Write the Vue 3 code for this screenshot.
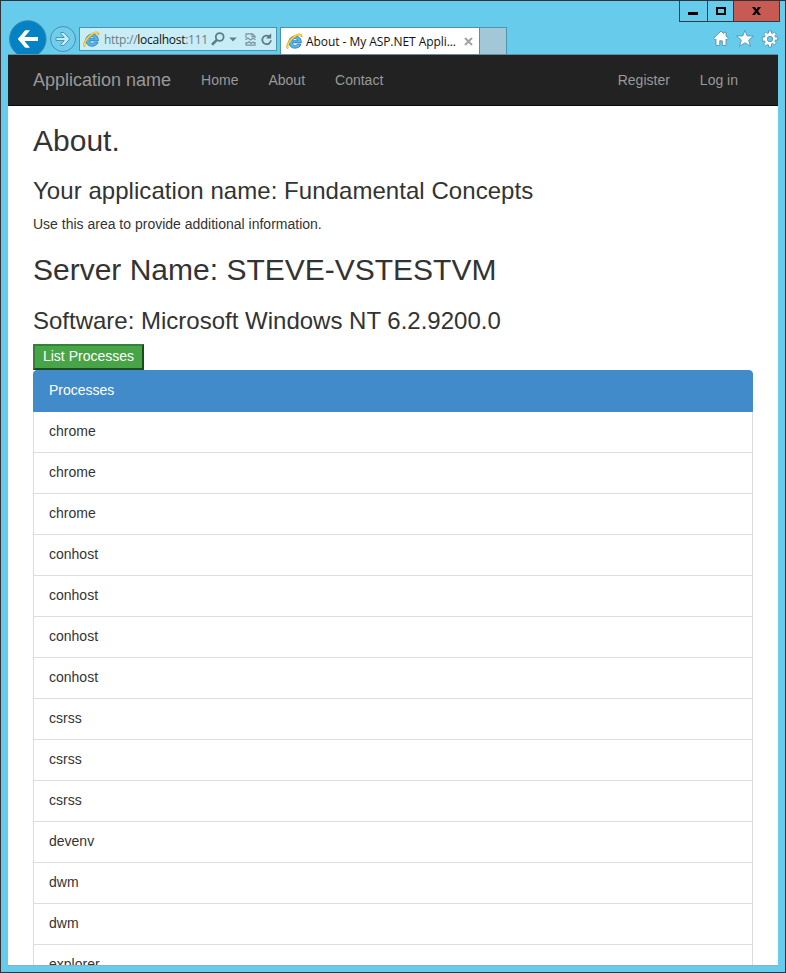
<script setup>
const processes = [
  'chrome', 'chrome', 'chrome', 'conhost', 'conhost', 'conhost', 'conhost',
  'csrss', 'csrss', 'csrss', 'devenv', 'dwm', 'dwm', 'explorer',
]
</script>

<template>
  <div class="window">
    <div class="caption">
      <button class="cap min" aria-label="Minimize">
        <svg width="27" height="20"><rect x="8" y="11" width="10" height="3" fill="#000" /></svg>
      </button>
      <button class="cap max" aria-label="Maximize">
        <svg width="25" height="20"><rect x="9" y="7" width="8" height="6" fill="none" stroke="#000" stroke-width="2" /></svg>
      </button>
      <button class="cap close" aria-label="Close">
        <svg width="45" height="20"><path d="M18 6h3l1.500 2.300L24 6h3l-3 4 3 4h-3l-1.500-2.300L21 14h-3l3-4z" fill="#000" /></svg>
      </button>
    </div>

    <div class="toolbar">
      <svg class="back" width="38" height="34" viewBox="0 0 38 34">
        <circle cx="18.800" cy="19" r="18.300" fill="#0482c4" stroke="#3a8ca9" stroke-width="1" />
        <path d="M29 17H15.500l5.500-6.800h-4.800L8.800 19l7.400 8.800H21L15.500 21H29z" fill="#fff" />
      </svg>
      <svg class="forward" width="28" height="28" viewBox="0 0 28 28">
        <circle cx="14" cy="14" r="12.500" fill="#70cdeb" stroke="#4592ae" stroke-width="1" />
        <path d="M7 12.500h8.200l-3.300-3.800V7.500h3l5.800 6.500-5.800 6.500h-3v-1.200l3.300-3.800H7z" fill="#c4edf9" stroke="#4895b0" stroke-width="1" />
      </svg>

      <div class="address">
        <svg class="ie" width="17" height="17" viewBox="0 0 17 17">
          <path d="M15.300 9.900H6.400c.3 2.800 4 3.300 5 1.300h3.600c-1.500 5.400-11.700 5.800-12.200-1.700C2.600 1.300 15.900.4 15.300 9.900zM6.500 7.700h5.100c-.4-2.800-4.600-2.800-5.100 0z" fill="#58b5e8" stroke="#2479b5" stroke-width=".8" />
          <path d="M2.200 15.600C-.3 13.500 2.600 8.300 7 4.600S15.800.1 15.400 4" fill="none" stroke="#e5a714" stroke-width="1.900" />
          <path d="M2 15C.5 13 3 8.300 7.200 4.500S15 .4 15.200 3" fill="none" stroke="#ffd640" stroke-width="1.100" />
        </svg>
        <span class="url">http://<b>localhost</b>:111</span>
        <svg class="search" width="14" height="14" viewBox="0 0 14 14">
          <circle cx="8.700" cy="5" r="3.900" fill="none" stroke="#5a7f8c" stroke-width="1.800" />
          <path d="M5.900 7.900L1 12.700" stroke="#5a7f8c" stroke-width="2.600" />
        </svg>
        <svg class="drop" width="8" height="5"><path d="M.3.500h7.400L4 4.500z" fill="#5a7f8c" /></svg>
        <svg class="compat" width="11" height="13" viewBox="0 0 11 13">
          <path d="M1 5V.8h6.500L10 3.200V5M1 9v3.200h9V9M7 1v2.700h3" fill="none" stroke="#78949e" stroke-width="1.200" />
          <path d="M.5 6.800L3 5l2.500 2L8 5.200l2.500 1.600M1.500 10.500L4 8.800l2 1.700L8 9l2 1.500" fill="none" stroke="#78949e" stroke-width="1.300" />
        </svg>
        <svg class="refresh" width="12" height="13" viewBox="0 0 12 13">
          <path d="M9.900 7.200A4.300 4.300 0 1 1 8.400 3.600" fill="none" stroke="#5c7984" stroke-width="1.800" />
          <path d="M10.200.3v5.200H5z" fill="#5c7984" />
        </svg>
      </div>

      <div class="tab">
        <svg class="ie" width="17" height="17" viewBox="0 0 17 17">
          <path d="M15.300 9.900H6.400c.3 2.800 4 3.300 5 1.300h3.600c-1.500 5.400-11.700 5.800-12.200-1.700C2.600 1.300 15.900.4 15.300 9.900zM6.500 7.700h5.100c-.4-2.800-4.600-2.800-5.100 0z" fill="#58b5e8" stroke="#2479b5" stroke-width=".8" />
          <path d="M2.200 15.600C-.3 13.500 2.600 8.300 7 4.600S15.800.1 15.400 4" fill="none" stroke="#e5a714" stroke-width="1.900" />
          <path d="M2 15C.5 13 3 8.300 7.200 4.500S15 .4 15.200 3" fill="none" stroke="#ffd640" stroke-width="1.100" />
        </svg>
        <span class="tab-title">About - My ASP.NET Appli...</span>
        <svg class="tab-close" width="9" height="9"><path d="M1 1l7 7M8 1L1 8" stroke="#a2a2a2" stroke-width="2" /></svg>
      </div>
      <div class="new-tab"></div>

      <div class="tools">
        <svg width="16" height="17" viewBox="0 0 16 17">
          <path d="M8 1L.6 8.300l1.500 1.400.9-.7v6.500h3.700v-4.700h2.600v4.700H13V9l.9.700 1.500-1.400-2.400-2.300V2.300h-2.200v1.500z" fill="#fff" stroke="#4b8ca5" stroke-width=".8" />
        </svg>
        <svg width="18" height="17" viewBox="0 0 18 17">
          <path d="M9 .5l2.200 5.400 6.300.2-4.800 3.900 1.700 6.200L9 12.800l-5.400 3.400L5.300 10 .5 6.100l6.300-.2z" fill="#fff" stroke="#4b8ca5" stroke-width=".8" />
        </svg>
        <svg width="18" height="18" viewBox="0 0 18 18">
          <path d="M7.500 1h3v2.100l1.100.5 1.700-1.500 2 2-1.400 1.700.5 1.200h2.300v3h-2.300l-.5 1.200 1.400 1.700-2 2-1.700-1.400-1.100.4V17h-3v-2.100l-1.100-.4-1.700 1.400-2-2 1.400-1.700-.5-1.200H1.300V7h2.300l.5-1.200-1.400-1.700 2-2 1.700 1.500 1.100-.5z" fill="#fff" stroke="#4b8ca5" stroke-width=".8" />
          <circle cx="9" cy="9" r="2.700" fill="#67cbeb" stroke="#4b8ca5" stroke-width=".8" />
        </svg>
      </div>
    </div>

    <div class="viewport">
      <nav class="navbar">
        <a class="brand">Application name</a>
        <a>Home</a>
        <a>About</a>
        <a>Contact</a>
        <a class="register">Register</a>
        <a>Log in</a>
      </nav>
      <main class="content">
        <h2>About.</h2>
        <h3 class="app-name">Your application name: Fundamental Concepts</h3>
        <p>Use this area to provide additional information.</p>
        <h2>Server Name: STEVE-VSTESTVM</h2>
        <h3 class="software">Software: Microsoft Windows NT 6.2.9200.0</h3>
        <button class="list-button">List Processes</button>
        <ul class="list">
          <li class="active">Processes</li>
          <li v-for="(name, i) in processes" :key="i">{{ name }}</li>
        </ul>
      </main>
    </div>
  </div>
</template>

<style>
body { margin: 0; overflow: hidden; }
</style>

<style scoped>
* { box-sizing: border-box; }
svg { display: block; flex: none; }
.window {
  width: 786px;
  height: 973px;
  display: flex;
  flex-direction: column;
  padding: 0 7px 6px;
  border: 1px solid #333236;
  background: #67cbeb;
  overflow: hidden;
  font-family: "Liberation Sans", Arial, sans-serif;
}
.caption {
  flex: none;
  display: flex;
  justify-content: flex-end;
  height: 21px;
  margin-right: -2px;
}
.cap {
  height: 21px;
  padding: 0;
  border: solid #343b40;
  border-width: 0 0 1px 1px;
  background: transparent;
}
.min { width: 28px; }
.max { width: 26px; }
.close { width: 47px; border-right-width: 1px; background: #c75b53; }
.toolbar {
  flex: none;
  display: flex;
  align-items: flex-start;
  height: 32px;
}
.back { margin: -2px 0 0 1px; }
.forward { margin: 3px 0 0 2px; }
.address {
  display: flex;
  align-items: center;
  width: 198px;
  height: 24px;
  margin: 5px 0 0 2px;
  padding-left: 3px;
  border: 1px solid #4a94ad;
  background: #c9edf7;
}
.url {
  width: 104px;
  margin-left: 4px;
  padding-top: 2px;
  white-space: nowrap;
  font: 12px/20px "Open Sans", "Noto Sans", sans-serif;
  letter-spacing: -0.27px;
  color: #697d85;
}
.url b { font-weight: 400; color: #111; }
.search { margin-left: 3px; }
.drop { margin-left: 4px; }
.compat { margin-left: 8px; }
.refresh { margin-left: 5px; }
.tab {
  display: flex;
  align-items: center;
  width: 200px;
  height: 27px;
  margin: 5px 0 0 3px;
  padding-left: 5px;
  border: solid #4a94ad;
  border-width: 1px 1px 0;
  background: #fff;
}
.tab-title {
  width: 153px;
  margin-left: 3px;
  padding-top: 1px;
  white-space: nowrap;
  font: 12px/20px "Open Sans", "Noto Sans", sans-serif;
  letter-spacing: -0.06px;
  color: #111;
}
.tab-close { margin-left: 5px; }
.new-tab {
  width: 27px;
  height: 27px;
  margin-top: 5px;
  border: solid #4a94ad;
  border-width: 1px 1px 0 0;
  background: #a2c7d6;
}
.tools {
  display: flex;
  gap: 7px;
  margin: 8px -1px 0 auto;
}
.viewport {
  flex: 1;
  min-height: 0;
  overflow: hidden;
  border-top: 1px solid #668d9d;
  border-bottom: 1px solid #8bb1bf;
  background: #fff;
}
.navbar {
  display: flex;
  align-items: center;
  gap: 30px;
  height: 51px;
  padding: 0 40px 0 25px;
  border-bottom: 1px solid #080808;
  background: #222;
  font-size: 14px;
  line-height: 20px;
  color: #999;
}
.brand { font-size: 18px; }
.register { margin-left: auto; }
.content {
  padding: 18px 25px 0;
  font-size: 14px;
  line-height: 20px;
  color: #333;
}
h2, h3 { margin: 19px 0 10px; font-weight: 400; }
h2 { font-size: 30px; line-height: 33px; }
h3 { font-size: 24px; line-height: 26px; }
h2:first-child { margin-top: 0; }
.app-name { margin-top: 21px; letter-spacing: 0.05px; }
.software { margin-top: 22px; }
p { margin: 0 0 10px; }
.list-button {
  display: block;
  width: 111px;
  height: 26px;
  padding: 0 0 2px;
  border: 2px solid;
  border-color: #35803a #1c4a20 #1c4a20 #35803a;
  background: #47a447;
  font: 14px/20px "Liberation Sans", Arial, sans-serif;
  color: #fff;
}
.list { margin: 0; padding: 0; list-style: none; }
.list li {
  height: 42px;
  margin-bottom: -1px;
  padding: 9px 15px 11px;
  border: 1px solid #ddd;
}
.list .active {
  position: relative;
  border-color: #428bca;
  border-radius: 4px 4px 0 0;
  background: #428bca;
  color: #fff;
}
</style>
